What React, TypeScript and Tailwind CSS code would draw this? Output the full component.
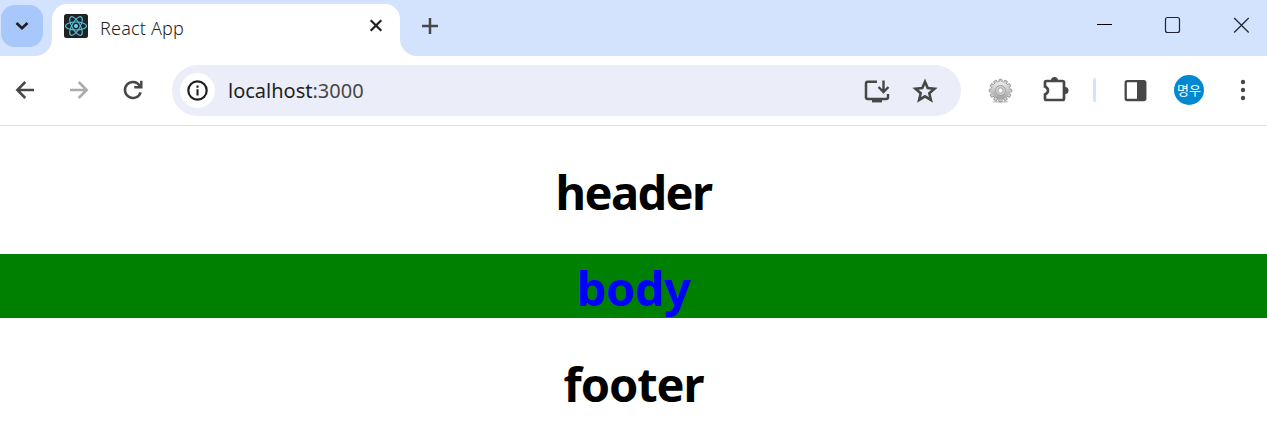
import type { ReactNode } from "react";

type IconProps = { box: string; className: string; children: ReactNode };

function Icon({ box, className, children }: IconProps) {
  return (
    <svg viewBox={box} className={`block shrink-0 ${className}`} fill="none">
      {children}
    </svg>
  );
}

const gearTeeth = Array.from({ length: 12 }, (_, i) => i * 30);

function ReactLogo() {
  return (
    <svg viewBox="0 0 24 24" className="mt-[10px] ml-3 block h-6 w-6 shrink-0" fill="none">
      <rect width="24" height="24" rx="2.5" fill="#202224" />
      <g stroke="#53c1de" strokeWidth="1.15">
        <ellipse cx="12" cy="12" rx="10.5" ry="4" />
        <ellipse cx="12" cy="12" rx="10.5" ry="4" transform="rotate(60 12 12)" />
        <ellipse cx="12" cy="12" rx="10.5" ry="4" transform="rotate(120 12 12)" />
      </g>
      <circle cx="12" cy="12" r="2" fill="#61dafb" />
    </svg>
  );
}

function TabStrip() {
  return (
    <div className="flex h-14 bg-white">
      <div className="w-[52px] shrink-0 rounded-br-[17px] bg-[#d3e3fd] pt-[5px] pl-px">
        <button className="block h-[42px] w-[42px] rounded-[14px] bg-[#a8c7fa]">
          <Icon box="1 5 42 42" className="h-[42px] w-[42px]">
            <path d="M16.5 23l5.5 5.3 5.5-5.3" stroke="#1f1f1f" strokeWidth="2.6" />
          </Icon>
        </button>
      </div>
      <div className="w-[348px] shrink-0 bg-[#d3e3fd] pt-1">
        <div className="flex h-[52px] rounded-t-[15px] bg-white">
          <ReactLogo />
          <span className="mt-[11px] ml-3 flex-1 text-[18px] leading-[26px] font-light tracking-[0.2px] text-[#1f1f1f] [font-family:'Noto_Sans',sans-serif]">
            React App
          </span>
          <Icon box="364 13 24 24" className="mt-[9px] mr-3 h-6 w-6">
            <path d="M370.7 20.2l10.6 10.6M381.3 20.2l-10.6 10.6" stroke="#1f1f1f" strokeWidth="2.2" />
          </Icon>
        </div>
      </div>
      <div className="flex flex-1 justify-between rounded-bl-[17px] bg-[#d3e3fd]">
        <Icon box="400 0 56 56" className="h-14 w-14">
          <path d="M430 18v16M422 26h16" stroke="#474747" strokeWidth="2.5" />
        </Icon>
        <div className="flex">
          <Icon box="1070 0 68 56" className="h-14 w-[68px]">
            <path d="M1097 24.5h15" stroke="#000" />
          </Icon>
          <Icon box="1138 0 68 56" className="h-14 w-[68px]">
            <rect x="1165.5" y="17.5" width="14" height="15" rx="2" stroke="#20242c" strokeWidth="1.2" />
          </Icon>
          <Icon box="1206 0 61 56" className="h-14 w-[61px]">
            <path d="M1234.2 18l14.5 14.5M1248.7 18l-14.5 14.5" stroke="#20242c" strokeWidth="1.2" />
          </Icon>
        </div>
      </div>
    </div>
  );
}

function AddressBar() {
  return (
    <div className="mt-px flex h-[51px] w-[789px] shrink-0 items-center rounded-full bg-[#ebeef8]">
      <Icon box="180 73 35 35" className="ml-2 h-[35px] w-[35px]">
        <circle cx="197.5" cy="90.5" r="17.5" fill="#fff" />
        <circle cx="197.5" cy="90.5" r="9.2" stroke="#1f1f1f" strokeWidth="2.2" />
        <path d="M197.5 89.2v6.2M197.5 85.5v2.2" stroke="#1f1f1f" strokeWidth="2.1" />
      </Icon>
      <span className="ml-[13px] flex-1 text-[20px] leading-7 text-[#474747] [font-family:'Noto_Sans',sans-serif]">
        <span className="text-[#1f1f1f]">localhost</span>:3000
      </span>
      <Icon box="859 72 36 36" className="mr-3 h-9 w-9">
        <path
          d="M877 80.8h-9.3q-1.7 0-1.7 1.7v13.8q0 1.7 1.7 1.7h18.6q1.7 0 1.7-1.7V93"
          stroke="#474747"
          strokeWidth="2.5"
        />
        <path d="M872 97.5h10v3.9h-10z" fill="#474747" />
        <path d="M883.5 79.5v11M878.5 86l5 5 5-5" stroke="#474747" strokeWidth="2.4" />
      </Icon>
      <Icon box="907 72 36 36" className="mr-[18px] h-9 w-9">
        <path
          d="M925 80.8l2.7 6.3 6.8.6-5.2 4.5 1.6 6.7-5.9-3.6-5.9 3.6 1.6-6.7-5.2-4.5 6.8-.6z"
          stroke="#474747"
          strokeWidth="2.6"
        />
      </Icon>
    </div>
  );
}

function Toolbar() {
  return (
    <div className="flex h-[70px] items-center border-b border-[#dfe0e2] bg-white pb-px">
      <Icon box="0 72 52 36" className="h-9 w-[52px]">
        <path d="M34 90H17.5M25.3 82l-8 8 8 8" stroke="#474747" strokeWidth="2.5" />
      </Icon>
      <Icon box="52 72 54 36" className="h-9 w-[54px]">
        <path d="M70 90h16.5M78.7 82l8 8-8 8" stroke="#ababab" strokeWidth="2.5" />
      </Icon>
      <Icon box="106 72 66 36" className="h-9 w-[66px]">
        <path d="M140.6 92.3A8 8 0 1 1 139.4 85.2L141.2 87.2" stroke="#474747" strokeWidth="2.5" />
        <path d="M141.3 80.8v6.5h-7" stroke="#474747" strokeWidth="2.4" />
      </Icon>
      <AddressBar />
      <Icon box="961 72 65 36" className="h-9 w-[65px]">
        <defs>
          <linearGradient id="gear" x1="0" y1="0" x2="0" y2="1">
            <stop offset="0" stopColor="#eeeeee" />
            <stop offset="1" stopColor="#a0a0a0" />
          </linearGradient>
        </defs>
        <ellipse cx="1000.5" cy="101.8" rx="8" ry="1" fill="#ccc" />
        {gearTeeth.map((angle) => (
          <rect
            key={angle}
            x="998.9"
            y="79.2"
            width="3.2"
            height="4"
            rx="1"
            fill="#cfcfcf"
            stroke="#858585"
            strokeWidth=".8"
            transform={`rotate(${angle} 1000.5 90.5)`}
          />
        ))}
        <circle cx="1000.5" cy="90.5" r="8.7" fill="url(#gear)" />
        <circle cx="1000.5" cy="90.5" r="5" stroke="#9a9a9a" strokeWidth=".9" fill="#d2d2d2" />
        <circle cx="1000.5" cy="90.5" r="2.6" fill="#fff" stroke="#909090" strokeWidth=".8" />
      </Icon>
      <Icon box="1026 72 67 36" className="h-9 w-[67px]">
        <path
          d="M1046.5 81h16q1.5 0 1.5 1.5v16q0 1.5-1.5 1.5h-16q-1.5 0-1.5-1.5v-4q3-1.3 3-4t-3-4v-4q0-1.5 1.5-1.5z"
          stroke="#474747"
          strokeWidth="2.7"
        />
        <path d="M1051 80.5a3.5 3.5 0 0 1 7 0zM1065 87a3.5 3.5 0 0 1 0 7z" fill="#474747" />
      </Icon>
      <div className="h-6 w-[3px] shrink-0 rounded-full bg-[#d3e3fd]" />
      <Icon box="1096 72 78 36" className="h-9 w-[78px]">
        <rect x="1125.7" y="81.2" width="19.6" height="18.8" rx="1.5" stroke="#474747" strokeWidth="2.3" />
        <path d="M1137 81h8v19h-8z" fill="#474747" />
      </Icon>
      <div className="flex h-[30px] w-[30px] shrink-0 items-center justify-center rounded-full bg-[#0288d1] pb-[2px] text-[13px] leading-none whitespace-nowrap text-white [font-family:'Noto_Sans_CJK_KR',sans-serif]">
        명우
      </div>
      <Icon box="1204 72 63 36" className="h-9 w-[63px]">
        <circle cx="1243" cy="82" r="2.2" fill="#474747" />
        <circle cx="1243" cy="90" r="2.2" fill="#474747" />
        <circle cx="1243" cy="98" r="2.2" fill="#474747" />
      </Icon>
    </div>
  );
}

export default function App() {
  return (
    <div className="flex h-[444px] w-[1267px] flex-col overflow-hidden bg-white">
      <TabStrip />
      <Toolbar />
      <main className="flex flex-col gap-8 pt-8 text-center text-[47px] leading-[59px] font-bold text-black [font-family:'Noto_Sans',sans-serif]">
        <h1 className="h-16 pt-[5px] tracking-[-1.6px]">header</h1>
        <h1 className="h-16 bg-[#008000] pt-[5px] tracking-[-0.5px] text-[#0000ff]">body</h1>
        <h1 className="h-16 pt-[5px] tracking-[-1.1px]">footer</h1>
      </main>
    </div>
  );
}
